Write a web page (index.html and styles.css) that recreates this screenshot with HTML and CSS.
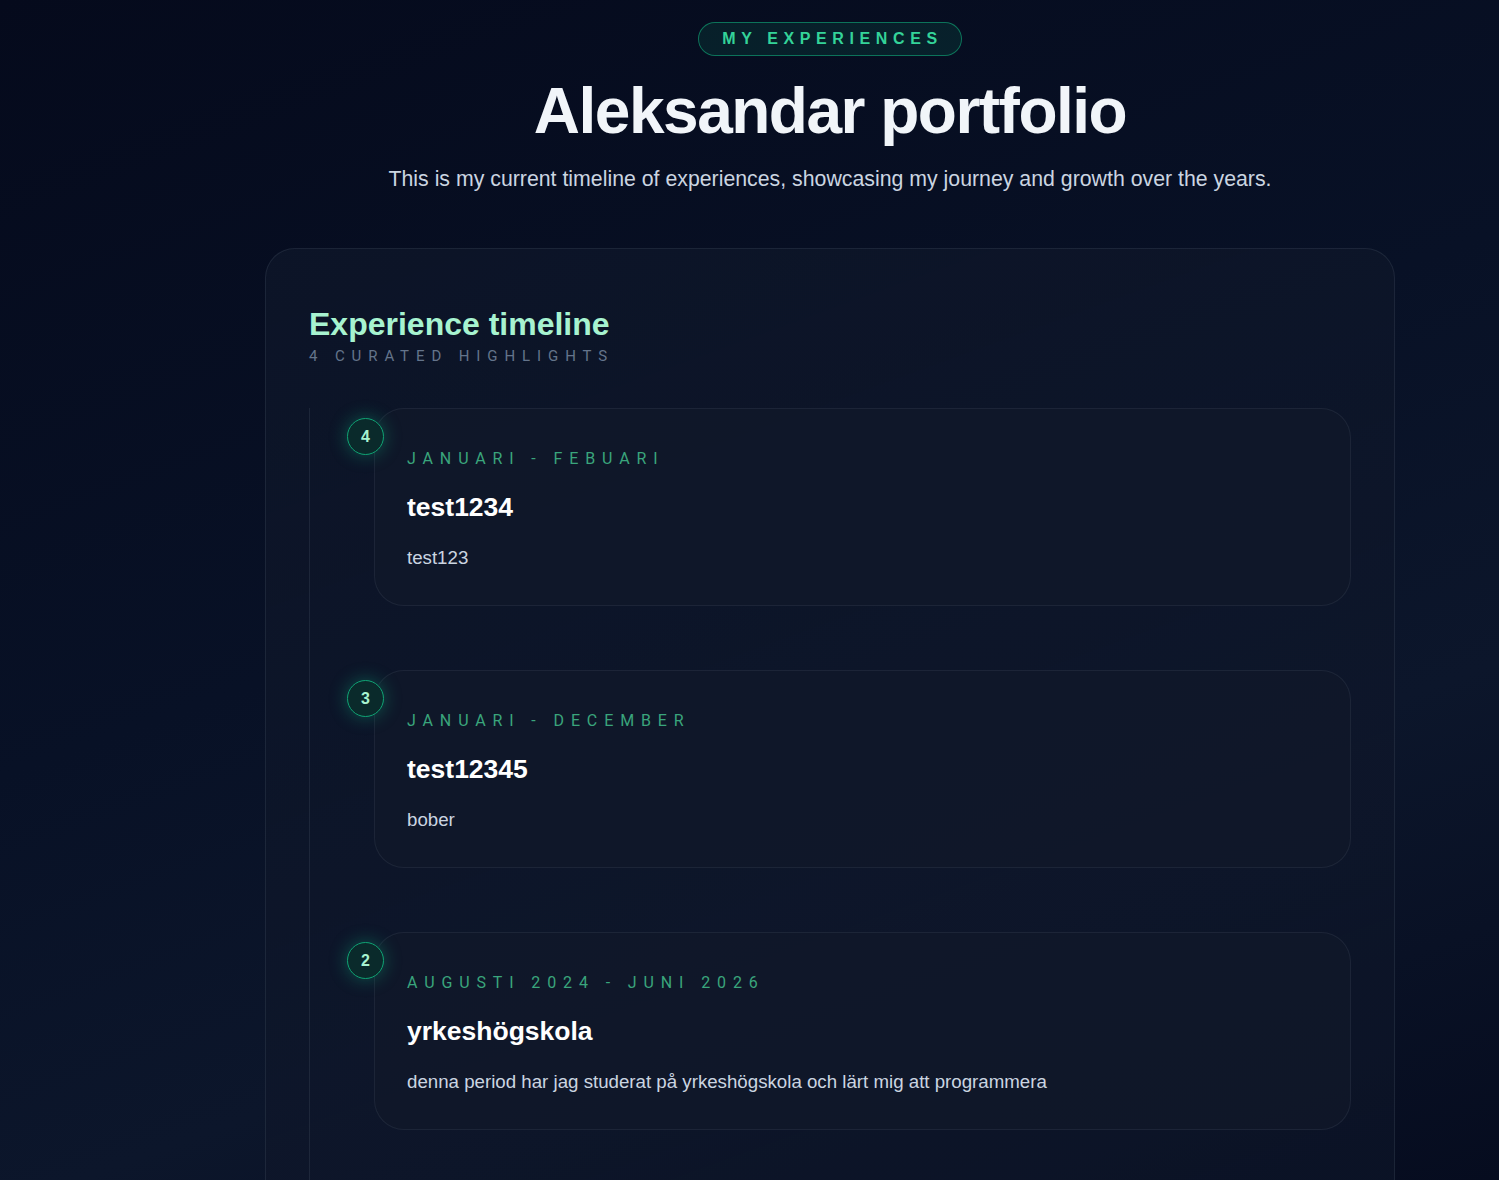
FILE: index.html
```html
<!DOCTYPE html>
<html lang="sv">
<head>
<meta charset="utf-8">
<title>Aleksandar portfolio</title>
<link rel="stylesheet" href="styles.css">
</head>
<body>
<main class="page">
  <header class="hero">
    <span class="badge">MY EXPERIENCES</span>
    <h1 class="hero-title">Aleksandar portfolio</h1>
    <p class="hero-sub">This is my current timeline of experiences, showcasing my journey and growth over the years.</p>
  </header>

  <section class="panel">
    <div class="panel-head">
      <h2 class="panel-title">Experience timeline</h2>
      <p class="panel-meta">4 CURATED HIGHLIGHTS</p>
    </div>

    <ol class="timeline">
      <li class="item">
        <span class="dot">4</span>
        <article class="card">
          <p class="date">JANUARI - FEBUARI</p>
          <h3 class="card-title">test1234</h3>
          <p class="card-text">test123</p>
        </article>
      </li>
      <li class="item">
        <span class="dot">3</span>
        <article class="card">
          <p class="date">JANUARI - DECEMBER</p>
          <h3 class="card-title">test12345</h3>
          <p class="card-text">bober</p>
        </article>
      </li>
      <li class="item">
        <span class="dot">2</span>
        <article class="card">
          <p class="date">AUGUSTI 2024 - JUNI 2026</p>
          <h3 class="card-title">yrkeshögskola</h3>
          <p class="card-text">denna period har jag studerat på yrkeshögskola och lärt mig att programmera</p>
        </article>
      </li>
      <li class="item">
        <span class="dot">1</span>
        <article class="card">
          <p class="date">AUGUSTI 2023 - JUNI 2024</p>
          <h3 class="card-title">gymnasiet</h3>
          <p class="card-text">test</p>
        </article>
      </li>
    </ol>
  </section>
</main>
</body>
</html>
```

FILE: styles.css
```css
* { box-sizing: border-box; }

html, body {
  margin: 0;
  padding: 0;
}

body {
  min-height: 100vh;
  font-family: "Liberation Sans", Arial, sans-serif;
  color: #e2e8f0;
  background: linear-gradient(160deg, #050a1c 0%, #081126 45%, #0c162b 70%, #060c1f 100%);
  background-attachment: fixed;
}

.page {
  padding: 22px 0 80px 161px;
  display: flex;
  flex-direction: column;
  align-items: center;
}

.hero {
  display: flex;
  flex-direction: column;
  align-items: center;
  text-align: center;
}

.badge {
  display: inline-block;
  height: 34px;
  line-height: 32px;
  padding: 0 18px 0 23px;
  border: 1px solid rgba(16, 185, 129, 0.55);
  border-radius: 999px;
  background: rgba(16, 120, 90, 0.18);
  color: #34d399;
  font-weight: 700;
  font-size: 16px;
  letter-spacing: 0.35em;
}

.hero-title {
  margin: 17px 0 0;
  font-size: 64px;
  line-height: 76px;
  font-weight: 700;
  color: #f1f5f9;
  letter-spacing: -1.5px;
}

.hero-sub {
  margin: 16px 0 0;
  font-size: 21.3px;
  line-height: 28px;
  color: #cbd5e1;
}

.panel {
  margin-top: 55px;
  width: 1130px;
  border: 1px solid rgba(148, 163, 184, 0.12);
  border-radius: 30px;
  background: linear-gradient(160deg, rgba(15, 23, 42, 0.75), rgba(15, 23, 42, 0.55));
  padding: 57px 43px 40px;
}

.panel-title {
  margin: 0;
  font-size: 32px;
  line-height: 36px;
  font-weight: 700;
  color: #a7f3d0;
}

.panel-meta {
  margin: 5px 0 0;
  font-family: Roboto, "Liberation Sans", sans-serif;
  font-size: 15px;
  line-height: 18px;
  letter-spacing: 0.46em;
  color: #64748b;
}

.timeline {
  list-style: none;
  margin: 43px 0 0;
  padding: 0 0 0 64px;
  border-left: 1px solid rgba(148, 163, 184, 0.12);
  display: flex;
  flex-direction: column;
  gap: 64px;
}

.item {
  position: relative;
}

.dot {
  position: absolute;
  left: -27px;
  top: 10px;
  width: 37px;
  height: 37px;
  border-radius: 50%;
  border: 1.5px solid #10a374;
  background: #0a2a2b;
  color: #a7f3d0;
  font-weight: 700;
  font-size: 16px;
  display: flex;
  align-items: center;
  justify-content: center;
  box-shadow: 0 0 18px rgba(16, 185, 129, 0.4);
  z-index: 1;
}

.card {
  border: 1px solid rgba(148, 163, 184, 0.1);
  border-radius: 30px;
  background: rgba(17, 24, 41, 0.85);
  padding: 40px 32px 34px;
  min-height: 198px;
}

.date {
  margin: 0;
  font-family: Roboto, "Liberation Sans", sans-serif;
  font-size: 16px;
  line-height: 20px;
  letter-spacing: 0.43em;
  color: #3aa57c;
}

.card-title {
  margin: 20px 0 0;
  font-size: 26.5px;
  line-height: 36px;
  font-weight: 700;
  color: #ffffff;
}

.card-text {
  margin: 20px 0 0;
  font-size: 18.7px;
  line-height: 26px;
  color: #cbd5e1;
}
```
